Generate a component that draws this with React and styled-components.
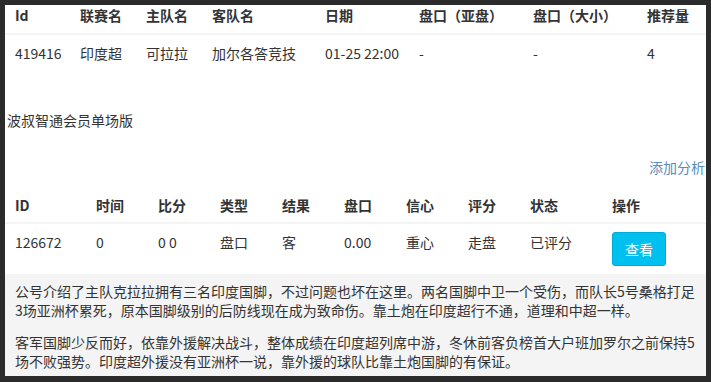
import React from "react";
import styled, { createGlobalStyle } from "styled-components";

const GlobalStyle = createGlobalStyle`
  html, body {
    margin: 0;
    padding: 0;
    background: #2b2b2b;
  }
  body {
    font-family: "Noto Sans CJK SC", "Liberation Sans", sans-serif;
    font-size: 14px;
    color: #333;
  }
`;

const Frame = styled.div`
  margin: 5px;
  width: 701px;
  height: 371px;
  overflow: hidden;
  background: #fff;
`;

const Inner = styled.div`
  width: 712px;
`;

const Table = styled.table`
  width: 712px;
  border-collapse: collapse;
  table-layout: fixed;
  margin-top: ${(p) => p.$gap || 0}px;
`;

const Th = styled.th`
  text-align: left;
  font-weight: 700;
  line-height: 20px;
  padding: ${(p) => (p.$flush ? "0 10px 8px" : "8px 10px 7px")};
  border-bottom: 2px solid #f4f4f4;
  white-space: nowrap;
  color: #333;
`;

const Td = styled.td`
  line-height: 20px;
  padding: 8px 10px;
  vertical-align: top;
  white-space: nowrap;
`;

const Title = styled.div`
  margin-top: 39px;
  padding-left: 2px;
  line-height: 20px;
`;

const LinkRow = styled.div`
  margin-top: 27px;
  text-align: right;
  padding-right: 12px;
  line-height: 20px;
`;

const Link = styled.a`
  color: #5a8cbc;
  text-decoration: none;
  cursor: pointer;
`;

const ViewButton = styled.button`
  width: 54px;
  height: 34px;
  padding: 0;
  border: 1px solid #00acd6;
  border-radius: 3px;
  background: #00c0ef;
  color: #fff;
  font-family: inherit;
  font-size: 14px;
  cursor: pointer;
`;

const Analysis = styled.div`
  background: #f4f4f4;
  padding: 8px 18px 8px 10px;
  width: 710px;
  box-sizing: border-box;
`;

const Para = styled.p`
  margin: 0 0 13px;
  line-height: 19px;
`;

const matchCols = [65, 66, 66, 113, 94, 114, 114, 80];
const matchHead = ["Id", "联赛名", "主队名", "客队名", "日期", "盘口（亚盘）", "盘口（大小）", "推荐量"];
const matchRow = ["419416", "印度超", "可拉拉", "加尔各答竞技", "01-25 22:00", "-", "-", "4"];

const tipCols = [81, 62, 62, 62, 62, 62, 62, 62, 82, 115];
const tipHead = ["ID", "时间", "比分", "类型", "结果", "盘口", "信心", "评分", "状态", "操作"];
const tipRow = ["126672", "0", "0 0", "盘口", "客", "0.00", "重心", "走盘", "已评分"];

export default function App() {
  return (
    <>
      <GlobalStyle />
      <Frame>
        <Inner>
          <Table>
            <colgroup>
              {matchCols.map((w, i) => (
                <col key={i} style={{ width: w }} />
              ))}
            </colgroup>
            <thead>
              <tr>
                {matchHead.map((h) => (
                  <Th key={h} $flush>
                    {h}
                  </Th>
                ))}
              </tr>
            </thead>
            <tbody>
              <tr>
                {matchRow.map((c, i) => (
                  <Td key={i}>{c}</Td>
                ))}
              </tr>
            </tbody>
          </Table>

          <Title>波叔智通会员单场版</Title>
          <LinkRow>
            <Link>添加分析</Link>
          </LinkRow>

          <Table $gap={10}>
            <colgroup>
              {tipCols.map((w, i) => (
                <col key={i} style={{ width: w }} />
              ))}
            </colgroup>
            <thead>
              <tr>
                {tipHead.map((h) => (
                  <Th key={h}>{h}</Th>
                ))}
              </tr>
            </thead>
            <tbody>
              <tr>
                {tipRow.map((c, i) => (
                  <Td key={i}>{c}</Td>
                ))}
                <Td>
                  <ViewButton>查看</ViewButton>
                </Td>
              </tr>
            </tbody>
          </Table>

          <Analysis>
            <Para>
              公号介绍了主队克拉拉拥有三名印度国脚，不过问题也坏在这里。两名国脚中卫一个受伤，而队长5号桑格打足3场亚洲杯累死，原本国脚级别的后防线现在成为致命伤。靠土炮在印度超行不通，道理和中超一样。
            </Para>
            <Para>
              客军国脚少反而好，依靠外援解决战斗，整体成绩在印度超列席中游，冬休前客负榜首大户班加罗尔之前保持5场不败强势。印度超外援没有亚洲杯一说，靠外援的球队比靠土炮国脚的有保证。
            </Para>
          </Analysis>
        </Inner>
      </Frame>
    </>
  );
}
